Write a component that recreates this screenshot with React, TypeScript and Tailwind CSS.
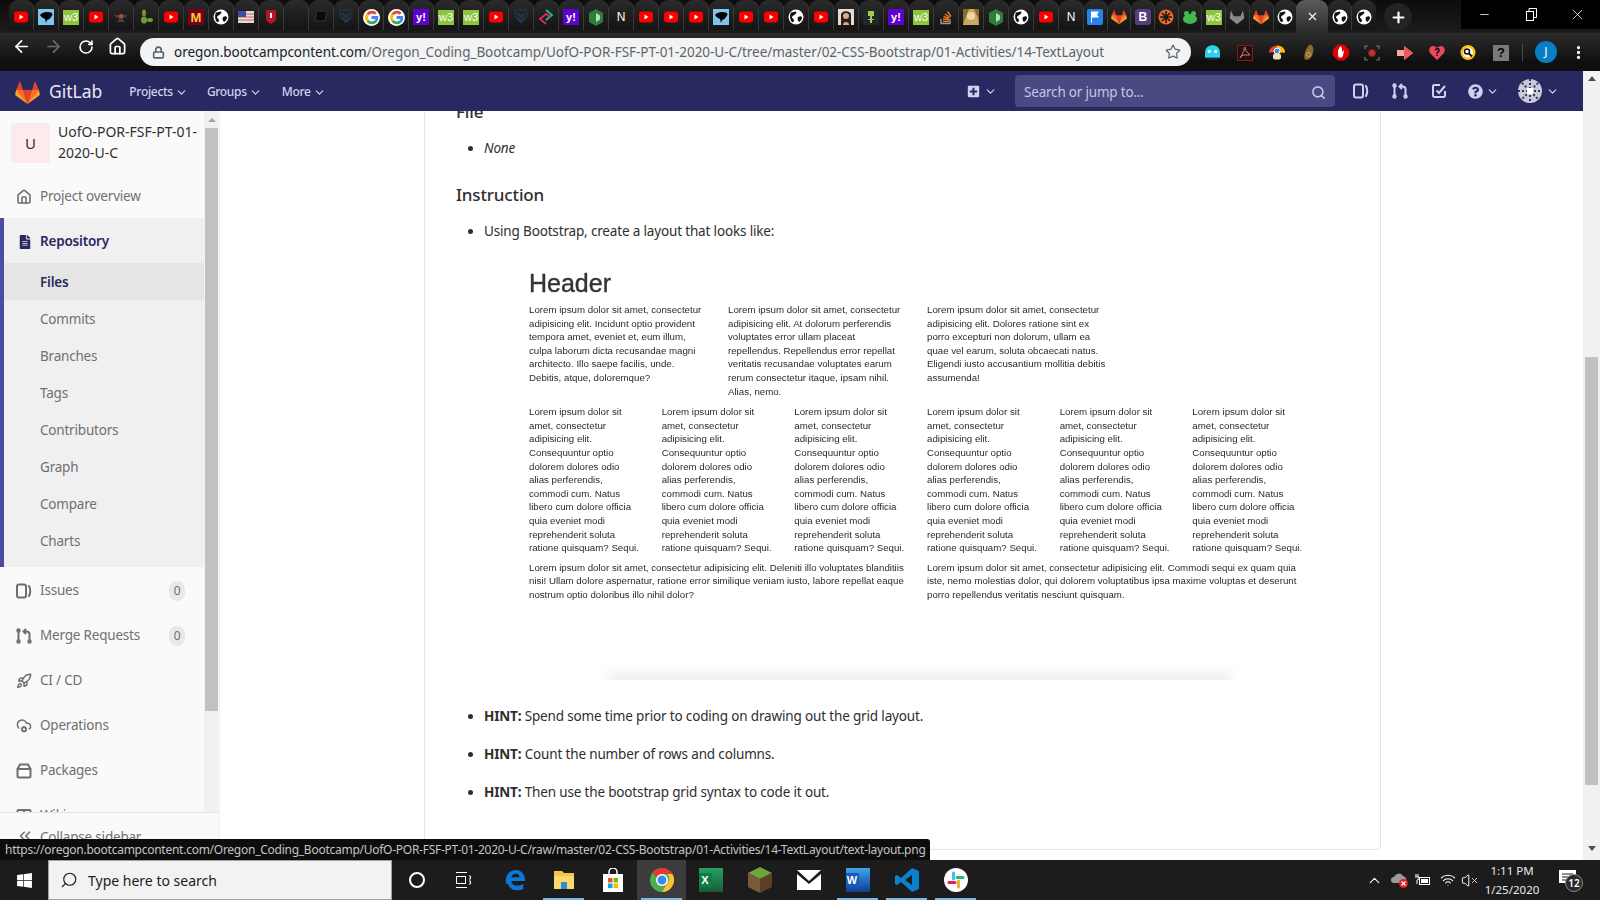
import { ReactNode } from "react";
import { ArrowLeft, ArrowRight, ChevronDown, ChevronUp, ChevronsLeft, CloudCog, House, Lock, MoreVertical, Plus, RotateCw, Rocket, Search, Star, Volume, Wifi, X, Minus } from "lucide-react";
import { FaFileAlt, FaPlusSquare, FaQuestionCircle, FaWindows } from "react-icons/fa";

const TAB_ICONS = [
  "yt", "bird", "w3", "yt", "anvil", "leaf", "yt", "m", "globe", "flag", "shield", "github", "book", "chev", "g", "g", "yahoo", "w3", "w3", "yt", "chev",
  "rhomb", "yahoo", "hex", "n", "yt", "yt", "yt", "bird", "yt", "yt", "globe", "yt", "photo", "android", "yahoo", "w3", "so", "photo2", "hex", "globe", "yt",
  "n", "bluef", "gitlab", "b", "orange", "frog", "w3", "graylab", "gitlab", "globe",
];

const COL_A = `Lorem ipsum dolor sit amet, consectetur
adipisicing elit. Incidunt optio provident
tempora amet, eveniet et, eum illum,
culpa laborum dicta recusandae magni
architecto. Illo saepe facilis, unde.
Debitis, atque, doloremque?`;
const COL_B = `Lorem ipsum dolor sit amet, consectetur
adipisicing elit. At dolorum perferendis
voluptates error ullam placeat
repellendus. Repellendus error repellat
veritatis recusandae voluptates earum
rerum consectetur itaque, ipsam nihil.
Alias, nemo.`;
const COL_C = `Lorem ipsum dolor sit amet, consectetur
adipisicing elit. Dolores ratione sint ex
porro excepturi non dolorum, ullam ea
quae vel earum, soluta obcaecati natus.
Eligendi iusto accusantium mollitia debitis
assumenda!`;
const COL_SMALL = `Lorem ipsum dolor sit
amet, consectetur
adipisicing elit.
Consequuntur optio
dolorem dolores odio
alias perferendis,
commodi cum. Natus
libero cum dolore officia
quia eveniet modi
reprehenderit soluta
ratione quisquam? Sequi.`;
const WIDE_A = `Lorem ipsum dolor sit amet, consectetur adipisicing elit. Deleniti illo voluptates blanditiis
nisi! Ullam dolore aspernatur, ratione error similique veniam iusto, labore repellat eaque
nostrum optio doloribus illo nihil dolor?`;
const WIDE_B = `Lorem ipsum dolor sit amet, consectetur adipisicing elit. Commodi sequi ex quam quia
iste, nemo molestias dolor, qui dolorem voluptatibus ipsa maxime voluptas et deserunt
porro repellendus veritatis nesciunt quisquam.`;

const SUB_ITEMS = ["Commits", "Branches", "Tags", "Contributors", "Graph", "Compare", "Charts"];

export default function App() {
  return (
    <div className="flex h-[900px] w-[1600px] flex-col overflow-hidden bg-white font-['Noto_Sans',sans-serif]">
      <TabStrip />
      <Toolbar />
      <div className="relative flex min-h-0 flex-1 flex-col">
        <GitlabNav />
        <div className="flex min-h-0 flex-1">
          <Sidebar />
          <Content />
          <PageScrollbar />
        </div>
        <div className="absolute bottom-0 left-0 flex h-[21px] w-[930px] items-center whitespace-nowrap rounded-tr-[3px] bg-[#0d0d0d] pl-[5px] text-[12px] tracking-[-0.26px] text-[#c4c4c4]">
          https://oregon.bootcampcontent.com/Oregon_Coding_Bootcamp/UofO-POR-FSF-PT-01-2020-U-C/raw/master/02-CSS-Bootstrap/01-Activities/14-TextLayout/text-layout.png
        </div>
      </div>
      <Taskbar />
    </div>
  );
}

function TabStrip() {
  return (
    <div className="flex h-[33px] shrink-0 items-start bg-gradient-to-b from-[#0c0c0c] to-[#1c1c1c] pl-[9px]">
      {TAB_ICONS.map((kind, i) => (
        <div
          key={i}
          className={`flex h-[30px] shrink-0 items-center justify-center rounded-t-[9px] border-r border-[#3a3a3a] bg-gradient-to-b from-[#2b2b2b] to-[#141414] pt-[4px] ${i < 43 ? "w-[25px]" : "w-[23.7px]"}`}
        >
          <Favicon kind={kind} />
        </div>
      ))}
      <div className="ml-[-1px] flex h-[33px] w-[32px] shrink-0 items-center justify-center rounded-t-[9px] bg-gradient-to-b from-[#5c5c5c] to-[#2a2a2a]">
        <X size={13} strokeWidth={2} className="text-white" />
      </div>
      <div className="flex h-[30px] w-[24px] shrink-0 items-center justify-center rounded-t-[9px] border-r border-[#3a3a3a] bg-gradient-to-b from-[#2b2b2b] to-[#141414] pt-[4px]">
        <Favicon kind="globe" />
      </div>
      <div className="flex h-[30px] w-[24px] shrink-0 items-center justify-center rounded-t-[9px] bg-gradient-to-b from-[#2b2b2b] to-[#141414] pt-[4px]">
        <Favicon kind="globe" />
      </div>
      <div className="ml-[8px] mt-[3px] flex h-[28px] w-[28px] shrink-0 items-center justify-center rounded-full bg-[#222222]">
        <Plus size={17} strokeWidth={3} className="text-white" />
      </div>
      <div className="ml-auto flex h-[29px] w-[139px] shrink-0 bg-black text-white">
        <div className="flex w-[47px] items-center justify-center"><Minus size={13} strokeWidth={1.4} /></div>
        <div className="flex w-[47px] items-center justify-center"><RestoreIcon /></div>
        <div className="flex w-[45px] items-center justify-center"><X size={17} strokeWidth={1.1} /></div>
      </div>
    </div>
  );
}

function RestoreIcon() {
  return (
    <svg width="11" height="13" viewBox="0 0 11 13" fill="none" stroke="white" strokeWidth="1">
      <rect x="0.5" y="3.5" width="7" height="9" />
      <path d="M3 3.5V.5h7.5v9H7.5" />
    </svg>
  );
}

function Favicon({ kind }: { kind: string }) {
  switch (kind) {
    case "yt":
      return (
        <svg width="16" height="16" viewBox="0 0 16 16">
          <rect x="1" y="2.5" width="14" height="11" rx="3" fill="#f00" />
          <path d="M6.5 5.5v5l4-2.5z" fill="#fff" />
        </svg>
      );
    case "bird":
      return (
        <svg width="16" height="16" viewBox="0 0 16 16">
          <rect width="16" height="16" fill="#7cc5ec" />
          <path d="M2 6c2-3 8-4 12-2 1 1 0 3-1 4-1 2-3 3-4 3l-1 3-1-4C5 9 3 8 2 6z" fill="#000" />
        </svg>
      );
    case "w3":
      return (
        <div className="flex h-[15px] w-[16px] items-center justify-center bg-[#8cc63e] font-['Liberation_Sans',sans-serif] text-[11px] leading-none text-white">w3</div>
      );
    case "anvil":
      return (
        <svg width="16" height="16" viewBox="0 0 16 16">
          <path d="M1 6h13c0 2-3 3-4 3v2l2 2H4l2-2V9C4 9 2 8 1 6z" fill="#444" />
          <circle cx="8" cy="7" r="2" fill="#c8501c" />
        </svg>
      );
    case "leaf":
      return (
        <svg width="16" height="16" viewBox="0 0 16 16" fill="#6f9a34">
          <ellipse cx="6" cy="4" rx="2" ry="3.5" />
          <ellipse cx="6" cy="11" rx="3" ry="3.5" />
          <ellipse cx="12" cy="11" rx="3" ry="2" />
        </svg>
      );
    case "m":
      return (
        <div className="flex h-[16px] w-[16px] items-center justify-center bg-[#7a0019] font-['Liberation_Sans',sans-serif] text-[13px] font-bold leading-none text-[#ffcc33]">M</div>
      );
    case "globe":
      return (
        <svg width="16" height="16" viewBox="0 0 16 16">
          <circle cx="8" cy="8" r="7.5" fill="#fff" />
          <path d="M3 3.5c2 0 3-1 5-1 1 1 0 2-1 3s-3 1-3 3c0 1 2 1 2 3 0 1-1 2-2 1.5C2 11 1.5 6 3 3.5zM10 8c2-1 3-1 4 0 0 2-1 4-3 5-1-1-2-3-1-5z" fill="#111" />
        </svg>
      );
    case "flag":
      return (
        <svg width="16" height="16" viewBox="0 0 16 16">
          <rect y="2" width="16" height="12" fill="#e9d7d7" />
          <path d="M0 5h16M0 8h16M0 11h16" stroke="#c96a6a" strokeWidth="1.2" />
          <rect y="2" width="8" height="6" fill="#3c4f9e" />
        </svg>
      );
    case "shield":
      return (
        <svg width="16" height="16" viewBox="0 0 16 16">
          <path d="M3 1h10v9c0 2-3 4-5 5-2-1-5-3-5-5z" fill="#b3152b" />
          <rect x="7" y="4" width="2" height="5" fill="#fff" />
        </svg>
      );
    case "github":
      return (
        <svg width="16" height="16" viewBox="0 0 16 16">
          <circle cx="8" cy="8" r="7" fill="none" stroke="#1e1e1e" strokeWidth="2" />
          <path d="M5 5l1 1h4l1-1v5l-2 2v2H7v-2l-2-2z" fill="#1e1e1e" />
        </svg>
      );
    case "book":
      return (
        <svg width="16" height="16" viewBox="0 0 16 16">
          <path d="M4 2h10l-2 10H2z" fill="#0a0a0a" stroke="#333" />
        </svg>
      );
    case "chev":
      return (
        <svg width="16" height="16" viewBox="0 0 16 16" fill="none" stroke="#24364f" strokeWidth="2">
          <path d="M2 1h12v7l-6 6-6-6z" strokeWidth="1" />
          <path d="M4 4l4 4 4-4M4 8l4 4 4-4" />
        </svg>
      );
    case "g":
      return (
        <svg width="17" height="17" viewBox="0 0 16 16" fill="none" strokeWidth="2.6">
          <circle cx="8" cy="8" r="8" fill="#fff" />
          <path d="M12 4.4A5 5 0 0 0 4.4 5" stroke="#ea4335" />
          <path d="M4.4 5a5 5 0 0 0 0 6" stroke="#fbbc05" />
          <path d="M4.4 11A5 5 0 0 0 12 11.6" stroke="#34a853" />
          <path d="M12 11.6A5 5 0 0 0 13 8H8" stroke="#4285f4" />
        </svg>
      );
    case "yahoo":
      return (
        <div className="flex h-[16px] w-[16px] items-center justify-center bg-[#5f01d1] font-['Liberation_Sans',sans-serif] text-[11px] font-bold leading-none text-white">y!</div>
      );
    case "rhomb":
      return (
        <svg width="16" height="16" viewBox="0 0 16 16" fill="none" strokeWidth="1.8">
          <path d="M8 1l6 5-6 5" stroke="#1fc08a" />
          <path d="M8 15l-6-5 6-5 4 3" stroke="#e8206e" />
        </svg>
      );
    case "hex":
      return (
        <svg width="16" height="17" viewBox="0 0 16 17">
          <path d="M8 0l7 4v9l-7 4-7-4V4z" fill="#2e7d3c" />
          <path d="M8 4l4 2.5v4L8 13z" fill="#b9dfb0" />
        </svg>
      );
    case "n":
      return <span className="font-['Liberation_Sans',sans-serif] text-[12px] leading-none text-white">N</span>;
    case "photo":
      return (
        <svg width="16" height="16" viewBox="0 0 16 16">
          <rect width="16" height="16" fill="#e6ddd2" />
          <path d="M3 16V6c0-5 10-5 10 0v10z" fill="#2b1f1c" />
          <circle cx="8" cy="7" r="3" fill="#d8ac8e" />
          <path d="M5 16c0-4 6-4 6 0z" fill="#d8ac8e" />
        </svg>
      );
    case "photo2":
      return (
        <svg width="16" height="16" viewBox="0 0 16 16">
          <rect width="16" height="16" fill="#c9a862" />
          <circle cx="8" cy="7" r="4" fill="#f0d6a5" />
          <path d="M0 0h6L2 10 0 16zM16 0h-5l4 9 1 7z" fill="#8a6b2e" />
        </svg>
      );
    case "android":
      return (
        <svg width="16" height="16" viewBox="0 0 16 16">
          <rect width="16" height="16" rx="2" fill="#20282a" />
          <path d="M5 2h6v5H9v3h2v1H9v3H7v-3H5v-1h2V7H5z" fill="#9fcf4a" />
        </svg>
      );
    case "so":
      return (
        <svg width="16" height="16" viewBox="0 0 16 16" fill="none" stroke="#e4792a" strokeWidth="1.4">
          <path d="M3 10v4.5h9V10" stroke="#999" />
          <path d="M5 12.5h6M5 10l6 .8M5.500 7.500l5.500 2M7 5l5 3.500M9.500 2.500l3.500 5" />
        </svg>
      );
    case "bluef":
      return (
        <svg width="16" height="16" viewBox="0 0 16 16">
          <rect width="16" height="16" rx="2" fill="#2684e8" />
          <path d="M4 2.500h8l-2 3 2 3H5v5H4z" fill="#fff" />
        </svg>
      );
    case "gitlab":
      return <GitlabLogo size={16} />;
    case "graylab":
      return (
        <svg width="16" height="16" viewBox="0 0 24 24" fill="#8a8a8a">
          <path d="M12 23L1 14l2-12 4 9h10l4-9 2 12z" />
        </svg>
      );
    case "b":
      return (
        <div className="flex h-[16px] w-[16px] items-center justify-center rounded-[3px] bg-[#563d7c] font-['Liberation_Sans',sans-serif] text-[12px] font-bold leading-none text-white">B</div>
      );
    case "orange":
      return (
        <svg width="16" height="16" viewBox="0 0 16 16">
          <circle cx="8" cy="8" r="7.5" fill="#ee6a22" />
          <path d="M8 2v12M2 8h12M4 4l8 8M12 4l-8 8" stroke="#1b1b1b" strokeWidth="1.6" />
        </svg>
      );
    case "frog":
      return (
        <svg width="16" height="16" viewBox="0 0 16 16" fill="#45b84d">
          <circle cx="4.5" cy="4.5" r="2.5" />
          <circle cx="11.5" cy="4.5" r="2.5" />
          <ellipse cx="8" cy="10" rx="7" ry="5" />
        </svg>
      );
    default:
      return null;
  }
}

function GitlabLogo({ size }: { size: number }) {
  return (
    <svg width={size} height={size} viewBox="0 0 24 24">
      <path d="M1 9.500l-.9 5 1 .5L12 23 7.600 9.500z" fill="#fca326" />
      <path d="M23 9.500l.9 5-1 .5L12 23l4.400-13.500z" fill="#fca326" />
      <path d="M12 23L1 9.500h6.600z" fill="#fc6d26" />
      <path d="M12 23L23 9.500h-6.600z" fill="#fc6d26" />
      <path d="M12 23L7.600 9.500h8.800z" fill="#e24329" />
      <path d="M1 9.500h6.600L4.800 1z" fill="#e24329" />
      <path d="M23 9.500h-6.600L19.200 1z" fill="#e24329" />
    </svg>
  );
}

function Toolbar() {
  return (
    <div className="flex h-[38px] shrink-0 items-start bg-[#0f0f0f]">
      <div className="flex h-[27px] w-full items-start border-b-0 bg-gradient-to-b from-[#2c2c2c] to-[#121212]">
        <div className="mt-[4px] flex w-[140px] shrink-0 items-center pl-[12px] text-white">
          <ArrowLeft size={19} strokeWidth={2.2} />
          <ArrowRight size={19} strokeWidth={2.2} className="ml-[13px] text-[#6c6c6c]" />
          <RotateCw size={16} strokeWidth={2.4} className="ml-[15px]" />
          <House size={19} strokeWidth={2.2} className="ml-[14px]" />
        </div>
        <div className="mt-[5px] flex h-[28px] w-[1051px] shrink-0 items-center rounded-full bg-[#f1f3f4] pl-[12px] pr-[10px]">
          <Lock size={13} strokeWidth={3} className="text-[#5f6368]" />
          <div className="ml-[9px] mt-px text-[13.5px] leading-none tracking-[-0.04px] text-[#202124]">
            oregon.bootcampcontent.com
            <span className="text-[#5f6368]">/Oregon_Coding_Bootcamp/UofO-POR-FSF-PT-01-2020-U-C/tree/master/02-CSS-Bootstrap/01-Activities/14-TextLayout</span>
          </div>
          <Star size={16} strokeWidth={1.8} className="ml-auto text-[#5f6368]" />
        </div>
        <div className="mt-[9px] flex items-center pl-[13px]">
          <ExtensionIcons />
        </div>
      </div>
    </div>
  );
}

function ExtensionIcons() {
  return (
    <>
      <svg width="17" height="17" viewBox="0 0 16 16" className="mr-[16px]">
        <path d="M1 8c0-9 14-9 14 0v5H1z" fill="#29d4ee" />
        <circle cx="5" cy="7" r="1.5" fill="#fff" />
        <circle cx="11" cy="7" r="1.5" fill="#fff" />
        <path d="M3 13h10v2H3z" fill="#0c2d36" />
      </svg>
      <svg width="16" height="16" viewBox="0 0 16 16" className="mr-[16px]">
        <rect x=".5" y=".5" width="15" height="15" fill="#2a0c0a" stroke="#7a1f16" />
        <path d="M3 13l4-7V3l1-1 1 4 4 4H6z" fill="none" stroke="#a08a88" />
      </svg>
      <svg width="16" height="17" viewBox="0 0 16 16" className="mr-[18px]">
        <path d="M0 8a8 7 0 0 1 16 0z" fill="#ea4335" />
        <path d="M8 8V1a8 7 0 0 1 8 7z" fill="#fbbc05" />
        <circle cx="8" cy="6.5" r="3" fill="#4285f4" stroke="#fff" />
        <rect x="4" y="9" width="8" height="6" rx="2" fill="#f1dfb0" />
      </svg>
      <svg width="12" height="17" viewBox="0 0 12 16" className="mr-[18px]">
        <path d="M7 0c3 1 4 4 3 8-1 5-4 8-8 7C0 11 3 3 7 0z" fill="#8f6a30" />
        <circle cx="5.5" cy="10" r="2" fill="none" stroke="#c9ad70" />
      </svg>
      <svg width="16" height="17" viewBox="0 0 16 16" className="mr-[15px]">
        <path d="M5 0h6l5 5v6l-5 5H5l-5-5V5z" fill="#e60000" />
        <path d="M5 11V5h1v3-5h1v5-6h1v6-5h1v5l1-2h1l-1 5-1 2H6z" fill="#fff" />
      </svg>
      <svg width="16" height="16" viewBox="0 0 16 16" fill="none" className="mr-[17px]">
        <path d="M1 4V1h3M12 1h3v3M15 12v3h-3M4 15H1v-3" stroke="#777" strokeWidth="1.2" />
        <circle cx="8" cy="8" r="3.5" fill="#c52f2f" stroke="#7c1d1d" />
      </svg>
      <svg width="16" height="14" viewBox="0 0 16 14" className="mr-[16px]">
        <path d="M0 4h7V0l9 7-9 7v-4H0z" fill="#f8a5a5" />
        <path d="M7 0l9 7-9 7z" fill="#f15a5a" />
      </svg>
      <div className="relative mr-[15px] flex h-[15px] w-[16px] items-center justify-center font-['Liberation_Sans',sans-serif] text-[10px] font-bold leading-none text-black">
        <svg width="16" height="15" viewBox="0 0 16 15" className="absolute inset-0">
          <path d="M8 15L1 8C-1 5 1 1 4 1c2 0 3 1 4 2 1-1 2-2 4-2 3 0 5 4 3 7z" fill="#e94a5b" />
        </svg>
        <span className="relative">?</span>
      </div>
      <svg width="16" height="17" viewBox="0 0 16 16" className="mr-[17px]">
        <circle cx="8" cy="8" r="7.5" fill="#fdc30e" />
        <circle cx="8" cy="8" r="5" fill="#fff" />
        <circle cx="7" cy="7" r="2.5" fill="none" stroke="#111" strokeWidth="1.5" />
        <path d="M9 9l3 3" stroke="#111" strokeWidth="2" />
      </svg>
      <div className="mr-[13px] flex h-[16px] w-[16px] items-center justify-center bg-[#7a7a7a] font-['Liberation_Sans',sans-serif] text-[13px] font-bold leading-none text-black">?</div>
      <div className="mr-[12px] h-[17px] w-px bg-[#4a4a4a]" />
      <div className="mt-[-1px] flex h-[22px] w-[22px] items-center justify-center rounded-full bg-[#0a7ec4] text-[12px] leading-none text-white">J</div>
      <MoreVertical size={17} strokeWidth={2.6} className="ml-[13px] text-white" />
    </>
  );
}

function GitlabNav() {
  return (
    <div className="flex h-[40px] shrink-0">
      <div className="flex w-[1583px] shrink-0 items-center bg-[#292961] pl-[15px] pt-[2px] text-[#d1d1f0]">
        <GitlabLogo size={25} />
        <span className="ml-[9px] text-[17.5px] leading-none text-[#e8e8f4]">GitLab</span>
        <div className="ml-[27px] flex items-center text-[12px] font-medium tracking-[-0.3px]">
          Projects
          <ChevronDown size={13} strokeWidth={2.2} className="ml-[2px]" />
        </div>
        <div className="ml-[19px] flex items-center text-[12px] font-medium tracking-[-0.3px]">
          Groups
          <ChevronDown size={13} strokeWidth={2.2} className="ml-[2px]" />
        </div>
        <div className="ml-[20px] flex items-center text-[12px] font-medium tracking-[-0.3px]">
          More
          <ChevronDown size={13} strokeWidth={2.2} className="ml-[2px]" />
        </div>
        <div className="ml-auto mt-[-2px] flex items-center">
          <FaPlusSquare size={13} />
          <ChevronDown size={13} strokeWidth={2.2} className="ml-[4px]" />
          <div className="ml-[18px] flex h-[32px] w-[320px] items-center rounded-[4px] bg-[#4a4a82] pl-[9px] pr-[9px] pt-[2px] text-[13.5px] tracking-[-0.2px] text-[#c5c5e4]">
            Search or jump to...
            <Search size={15} strokeWidth={2.6} className="ml-auto" />
          </div>
          <div className="ml-[18px]"><IssuesIcon className="text-[#d1d1f0]" /></div>
          <div className="ml-[23px]"><MergeIcon className="text-[#d1d1f0]" /></div>
          <svg width="16" height="16" viewBox="0 0 16 16" fill="none" stroke="#d1d1f0" strokeWidth="2" className="ml-[23px]">
            <path d="M9 2H3.500A1.500 1.500 0 0 0 2 3.500v9A1.500 1.500 0 0 0 3.500 14h9a1.500 1.500 0 0 0 1.500-1.500V8" />
            <path d="M5.500 7.500L8 10l6-7" />
          </svg>
          <FaQuestionCircle size={15} className="ml-[21px]" />
          <ChevronDown size={13} strokeWidth={2.2} className="ml-[3px]" />
          <svg width="24" height="24" viewBox="0 0 24 24" className="ml-[19px]">
            <circle cx="12" cy="12" r="12" fill="#c9c9d9" />
            <path d="M12 0v24M0 12h24M4 4l16 16M20 4L4 20" stroke="#33335c" strokeWidth="2" strokeDasharray="2 2" />
            <path d="M9 9h6v6H9z" fill="#fff" />
          </svg>
          <ChevronDown size={13} strokeWidth={2.2} className="ml-[4px] mr-[24px]" />
        </div>
      </div>
      <div className="flex w-[17px] shrink-0 justify-center bg-[#f1f1f1] pt-[5px]">
        <div className="h-0 w-0 border-x-[4px] border-b-[5px] border-x-transparent border-b-[#505050]" />
      </div>
    </div>
  );
}

function IssuesIcon({ className }: { className?: string }) {
  return (
    <svg width="16" height="16" viewBox="0 0 16 16" fill="none" stroke="currentColor" strokeWidth="2" className={className}>
      <rect x="1" y="1.5" width="9" height="13" rx="2" />
      <path d="M13 3c1.500 3 1.500 7 0 10" strokeLinecap="round" />
    </svg>
  );
}

function MergeIcon({ className }: { className?: string }) {
  return (
    <svg width="16" height="16" viewBox="0 0 16 16" fill="none" stroke="currentColor" strokeWidth="2" className={className}>
      <circle cx="2.5" cy="2.5" r="1.2" />
      <circle cx="2.5" cy="13.5" r="1.2" />
      <circle cx="13.5" cy="13.5" r="1.2" />
      <path d="M2.500 4v8M13.500 12V6c0-1.500-1-2.500-3-2.500H8M10 1L7.500 3.500 10 6" />
    </svg>
  );
}

function PackageIcon({ className }: { className?: string }) {
  return (
    <svg width="16" height="16" viewBox="0 0 16 16" fill="none" stroke="currentColor" strokeWidth="2" className={className}>
      <path d="M1.500 6h13v7a1.500 1.500 0 0 1-1.500 1.500H3A1.500 1.500 0 0 1 1.500 13zM1.500 6L4 1.500h8L14.500 6" />
    </svg>
  );
}

function BookIcon() {
  return (
    <svg width="16" height="16" viewBox="0 0 16 16" fill="none" stroke="currentColor" strokeWidth="2">
      <rect x="1.5" y="2" width="13" height="12" rx="1" />
      <path d="M8 2v12" />
    </svg>
  );
}

function SideRow({ icon, label, count }: { icon: ReactNode; label: string; count?: string }) {
  return (
    <div className="flex h-[45px] shrink-0 items-center pl-[16px] pr-[19px] pt-[2px] text-[13.5px] tracking-[-0.2px] text-[#707070]">
      <div className="flex w-[24px] shrink-0 text-[#6e6e6e]">{icon}</div>
      {label}
      {count && (
        <div className="ml-auto flex h-[20px] w-[16px] items-center justify-center rounded-full bg-[#e8e8e8] text-[12px] text-[#707070]">{count}</div>
      )}
    </div>
  );
}

function Sidebar() {
  return (
    <div className="relative flex h-full w-[220px] shrink-0 overflow-hidden border-r border-[#f0f0f0] bg-[#fafafa]">
      <div className="flex w-[204px] shrink-0 flex-col">
        <div className="flex h-[64px] shrink-0 items-start pl-[11px] pt-[12px]">
          <div className="flex h-[40px] w-[39px] shrink-0 items-center justify-center rounded-[3px] bg-[#fdeaea] text-[15px] text-[#333333]">U</div>
          <div className="ml-[8px] mt-[-2px] w-[146px] text-[14px] leading-[21px] text-[#303030]">UofO-POR-FSF-PT-01-2020-U-C</div>
        </div>
        <div className="flex h-[43px] shrink-0 items-center pl-[16px] text-[13.5px] tracking-[-0.2px] text-[#707070]">
          <House size={16} strokeWidth={2.4} className="mr-[8px] text-[#6e6e6e]" />
          Project overview
        </div>
        <div className="flex h-[349px] shrink-0 flex-col border-l-4 border-[#4b4ba3] bg-[#f0f0f0] text-[13.5px] tracking-[-0.2px]">
          <div className="flex h-[45px] shrink-0 items-center pl-[14px] pt-[2px] font-semibold text-[#292961]">
            <FaFileAlt size={14} className="mr-[8px] text-[#292961]" />
            Repository
          </div>
          <div className="flex h-[37px] shrink-0 items-center bg-[#e5e5e5] pl-[36px] pt-[2px] font-semibold text-[#292961]">Files</div>
          {SUB_ITEMS.map((label) => (
            <div key={label} className="flex h-[37px] shrink-0 items-center pl-[36px] pt-[2px] text-[#707070]">{label}</div>
          ))}
        </div>
        <SideRow icon={<IssuesIcon />} label="Issues" count="0" />
        <SideRow icon={<MergeIcon />} label="Merge Requests" count="0" />
        <SideRow icon={<Rocket size={16} strokeWidth={2.2} />} label="CI / CD" />
        <SideRow icon={<CloudCog size={16} strokeWidth={2.2} />} label="Operations" />
        <SideRow icon={<PackageIcon />} label="Packages" />
        <SideRow icon={<BookIcon />} label="Wiki" />
      </div>
      <div className="flex w-[14px] shrink-0 flex-col bg-[#f1f1f1] pl-px">
        <div className="flex h-[17px] shrink-0 items-center justify-center">
          <div className="h-0 w-0 border-x-[4px] border-b-[4px] border-x-transparent border-b-[#a3a3a3]" />
        </div>
        <div className="h-[583px] w-[13px] bg-[#c1c1c1]" />
      </div>
      <div className="absolute bottom-0 left-0 flex h-[48px] w-full items-start border-t border-[#e5e5e5] bg-[#fafafa] pl-[16px] pt-[14px] text-[13.5px] leading-[20px] tracking-[-0.2px] text-[#707070]">
        <ChevronsLeft size={18} strokeWidth={2.2} className="mr-[6px] shrink-0" />
        Collapse sidebar
      </div>
    </div>
  );
}

function ShotText({ text, className }: { text: string; className?: string }) {
  return (
    <div className={className}>
      {text.split("\n").map((line, i) => (
        <div key={i} className="whitespace-nowrap">{line}</div>
      ))}
    </div>
  );
}

function Content() {
  return (
    <div className="ml-[204px] mb-[10px] h-[739px] w-[957px] shrink-0 overflow-hidden rounded-br-[4px] border-b border-l border-r border-[#e5e5e5] pl-[31px] text-[13.5px] tracking-[-0.16px] text-[#2e2e2e]">
      <div className="mt-[-11px] text-[17px] font-medium leading-[24px]">File</div>
      <ul className="mt-[14px] list-disc pl-[28px]">
        <li className="italic leading-[21px]">None</li>
      </ul>
      <div className="mt-[24px] text-[17px] font-medium leading-[24px]">Instruction</div>
      <ul className="mt-[14px] list-disc pl-[28px]">
        <li className="leading-[21px]">Using Bootstrap, create a layout that looks like:</li>
      </ul>
      <ScreenshotImage />
      <ul className="mt-[26px] list-disc pl-[28px]">
        <li className="leading-[21px]"><b className="font-bold">HINT:</b> Spend some time prior to coding on drawing out the grid layout.</li>
        <li className="mt-[17px] leading-[21px]"><b className="font-bold">HINT:</b> Count the number of rows and columns.</li>
        <li className="mt-[17px] leading-[21px]"><b className="font-bold">HINT:</b> Then use the bootstrap grid syntax to code it out.</li>
      </ul>
    </div>
  );
}

function ScreenshotImage() {
  return (
    <div className="mt-[27px] pl-[73px] font-['Liberation_Sans',sans-serif] text-[9.7px] leading-[13.6px] tracking-normal text-[#2a2a2a] blur-[0.3px]">
      <div className="text-[25px] font-medium leading-[28px] text-[#333333] [-webkit-text-stroke:0.4px_#333333]">Header</div>
      <div className="mt-[6px] grid w-[796px] grid-cols-4">
        <ShotText text={COL_A} />
        <ShotText text={COL_B} />
        <ShotText text={COL_C} />
      </div>
      <div className="mt-[7px] grid w-[796px] grid-cols-6">
        {[0, 1, 2, 3, 4, 5].map((i) => (
          <ShotText key={i} text={COL_SMALL} />
        ))}
      </div>
      <div className="mt-[6px] grid w-[796px] grid-cols-2">
        <ShotText text={WIDE_A} />
        <ShotText text={WIDE_B} />
      </div>
      <div className="ml-[69px] mt-[53px] h-[26px] w-[643px] overflow-hidden">
        <div className="mx-[16px] mt-[26px] h-[2px] shadow-[0_0_16px_5px_rgba(0,0,0,0.11)]" />
      </div>
    </div>
  );
}

function PageScrollbar() {
  return (
    <div className="ml-auto flex h-full w-[17px] shrink-0 flex-col bg-[#f1f1f1]">
      <div className="h-[246px] shrink-0" />
      <div className="mx-[2px] h-[428px] shrink-0 bg-[#c1c1c1]" />
      <div className="mt-auto flex h-[20px] items-center justify-center pb-[4px]">
        <div className="h-0 w-0 border-x-[4px] border-t-[5px] border-x-transparent border-t-[#505050]" />
      </div>
    </div>
  );
}

function Taskbar() {
  return (
    <div className="flex h-[40px] shrink-0 items-center bg-[#1c1c1c] text-white">
      <div className="flex w-[48px] shrink-0 justify-center"><FaWindows size={17} /></div>
      <div className="flex h-[40px] w-[344px] shrink-0 items-center border border-[#a0a0a0] bg-[#f2f2f2] pl-[11px] text-[14px] text-[#1c1c1c]">
        <Search size={18} strokeWidth={1.5} className="-scale-x-100 text-[#1c1c1c]" />
        <span className="ml-[10px]">Type here to search</span>
      </div>
      <div className="flex w-[49px] shrink-0 justify-center">
        <div className="h-[16px] w-[16px] rounded-full border-2 border-white" />
      </div>
      <TaskSlot><TaskViewIcon /></TaskSlot>
      <TaskSlot><EdgeIcon /></TaskSlot>
      <TaskSlot active><ExplorerIcon /></TaskSlot>
      <TaskSlot><StoreIcon /></TaskSlot>
      <TaskSlot active current><ChromeIcon /></TaskSlot>
      <TaskSlot><ExcelIcon /></TaskSlot>
      <TaskSlot><GrassIcon /></TaskSlot>
      <TaskSlot><MailIcon /></TaskSlot>
      <TaskSlot active><WordIcon /></TaskSlot>
      <TaskSlot active><VsCodeIcon /></TaskSlot>
      <TaskSlot active><SlackIcon /></TaskSlot>
      <div className="ml-auto flex items-center">
        <ChevronUp size={17} strokeWidth={1.6} />
        <svg width="18" height="16" viewBox="0 0 18 16" className="ml-[8px]">
          <path d="M3 11a3 3 0 0 1 0-6 5 5 0 0 1 9-1 4 4 0 0 1 2 7z" fill="#9a9a9a" />
          <rect x="8" y="7" width="9" height="9" rx="4.5" fill="#e02020" />
          <path d="M10.500 9.500l4 4m0-4l-4 4" stroke="#fff" strokeWidth="1.3" />
        </svg>
        <svg width="16" height="14" viewBox="0 0 16 14" fill="none" stroke="#fff" className="ml-[5px]">
          <rect x="5.5" y="4.5" width="10" height="7" />
          <rect x="7" y="6" width="7" height="4" fill="#fff" stroke="none" />
          <path d="M2 1v3M4 1v3M1 4h4v2l-2 1v4" />
        </svg>
        <Wifi size={16} strokeWidth={1.6} className="ml-[10px]" />
        <Volume size={17} strokeWidth={1.4} className="ml-[5px]" />
        <X size={9} strokeWidth={2} className="ml-[-8px]" />
        <div className="ml-[3px] flex w-[60px] shrink-0 flex-col items-center text-[11.5px] leading-[19px] text-[#e8e8e8]">
          <div>1:11 PM</div>
          <div>1/25/2020</div>
        </div>
        <div className="relative ml-[17px] mr-[24px] h-[22px] w-[17px]">
          <svg width="17" height="15" viewBox="0 0 17 15" className="absolute left-0 top-[1px]">
            <path d="M0 0h17v13H0z" fill="#fff" />
            <path d="M3 4h11M3 7h11M3 10h7" stroke="#1c1c1c" />
          </svg>
          <div className="absolute left-[6px] top-[5px] flex h-[18px] w-[18px] items-center justify-center rounded-full border border-[#8a8a8a] bg-[#2a2a2a] text-[10px] font-semibold leading-none text-white">12</div>
        </div>
      </div>
    </div>
  );
}

function TaskSlot({ children, active, current }: { children: ReactNode; active?: boolean; current?: boolean }) {
  return (
    <div className={`relative flex h-[40px] w-[49px] shrink-0 items-center justify-center ${current ? "bg-[#3c3c3c]" : ""}`}>
      {children}
      {active && <div className="absolute bottom-0 left-[4px] right-[4px] h-[2px] bg-[#76b9ed]" />}
    </div>
  );
}

function TaskViewIcon() {
  return (
    <svg width="16" height="18" viewBox="0 0 16 18" fill="none" stroke="#fff" className="mr-[5px]">
      <path d="M1 1.500h11M1 16.500h11" />
      <rect x="1.5" y="5.5" width="9" height="7" />
      <path d="M14 5h1.500v3H14M14 10h1.500v3H14" />
    </svg>
  );
}

function EdgeIcon() {
  return (
    <svg width="22" height="24" viewBox="0 0 24 24">
      <path d="M2 11C3 4 8 1 13 1c6 0 10 5 10 12H8c0 5 8 7 13 3v6c-8 3-16 0-17-7-1 3-2 3-2-4zM8 9h9c0-5-8-5-9 0z" fill="#0d78d4" />
    </svg>
  );
}

function ExplorerIcon() {
  return (
    <svg width="22" height="22" viewBox="0 0 22 22">
      <path d="M1 2h8l2 2h10v4H1z" fill="#f3c54a" />
      <rect x="1" y="7" width="20" height="13" fill="#fbd968" />
      <rect x="8" y="13" width="6" height="7" fill="#2a8fdb" />
    </svg>
  );
}

function StoreIcon() {
  return (
    <svg width="20" height="24" viewBox="0 0 20 24" fill="none">
      <path d="M6 7V4a4 4 0 0 1 8 0v3" stroke="#fff" strokeWidth="1.5" />
      <rect y="6" width="20" height="18" fill="#fff" />
      <rect x="5" y="10" width="4.5" height="4.5" fill="#f25022" />
      <rect x="10.5" y="10" width="4.5" height="4.5" fill="#7fba00" />
      <rect x="5" y="15.5" width="4.5" height="4.5" fill="#00a4ef" />
      <rect x="10.5" y="15.5" width="4.5" height="4.5" fill="#ffb900" />
    </svg>
  );
}

function ChromeIcon() {
  return (
    <svg width="24" height="24" viewBox="0 0 24 24">
      <circle cx="12" cy="12" r="12" fill="#4caf50" />
      <path d="M12 0a12 12 0 0 1 10.400 6H12a6 6 0 0 0-5.500 3.500L2.300 5A12 12 0 0 1 12 0z" fill="#e5392f" />
      <path d="M22.400 6A12 12 0 0 1 12 24l5-8.500a6 6 0 0 0 0-9.500z" fill="#fbc02d" />
      <circle cx="12" cy="12" r="6" fill="#fff" />
      <circle cx="12" cy="12" r="4.5" fill="#3f87f0" />
    </svg>
  );
}

function ExcelIcon() {
  return (
    <div className="relative h-[24px] w-[24px] bg-gradient-to-b from-[#21a366] to-[#185c37]">
      <div className="absolute left-0 top-[5px] flex h-[14px] w-[13px] items-center justify-center bg-[#107c41] font-['Liberation_Sans',sans-serif] text-[11px] font-bold leading-none text-white">X</div>
    </div>
  );
}

function GrassIcon() {
  return (
    <svg width="24" height="26" viewBox="0 0 24 26">
      <path d="M12 0l12 6-12 6L0 6z" fill="#6fa53b" />
      <path d="M0 6l12 6v14L0 20z" fill="#7a5a3c" />
      <path d="M24 6l-12 6v14l12-6z" fill="#5a4029" />
    </svg>
  );
}

function MailIcon() {
  return (
    <svg width="24" height="20" viewBox="0 0 24 20">
      <path d="M0 0h24v20H0z" fill="#fff" />
      <path d="M0 0l12 11L24 0v4L12 14 0 4z" fill="#1c1c1c" />
    </svg>
  );
}

function WordIcon() {
  return (
    <div className="relative h-[24px] w-[24px] bg-gradient-to-b from-[#41a5ee] to-[#103f91]">
      <div className="absolute left-0 top-[5px] flex h-[14px] w-[13px] items-center justify-center bg-[#185abd] font-['Liberation_Sans',sans-serif] text-[11px] font-bold leading-none text-white">W</div>
    </div>
  );
}

function VsCodeIcon() {
  return (
    <svg width="24" height="26" viewBox="0 0 24 24">
      <path d="M17 0l7 3v18l-7 3-11-10-4 3-2-1V8l2-1 4 3zM17 7l-7 5 7 5z" fill="#0e7fcf" />
    </svg>
  );
}

function SlackIcon() {
  return (
    <svg width="24" height="24" viewBox="0 0 24 24">
      <circle cx="12" cy="12" r="12" fill="#fff" />
      <path d="M9.500 5v6" stroke="#36c5f0" strokeWidth="3" strokeLinecap="round" />
      <path d="M19 9.500h-6" stroke="#2eb67d" strokeWidth="3" strokeLinecap="round" />
      <path d="M14.500 19v-6" stroke="#ecb22e" strokeWidth="3" strokeLinecap="round" />
      <path d="M5 14.500h6" stroke="#e01e5a" strokeWidth="3" strokeLinecap="round" />
    </svg>
  );
}
